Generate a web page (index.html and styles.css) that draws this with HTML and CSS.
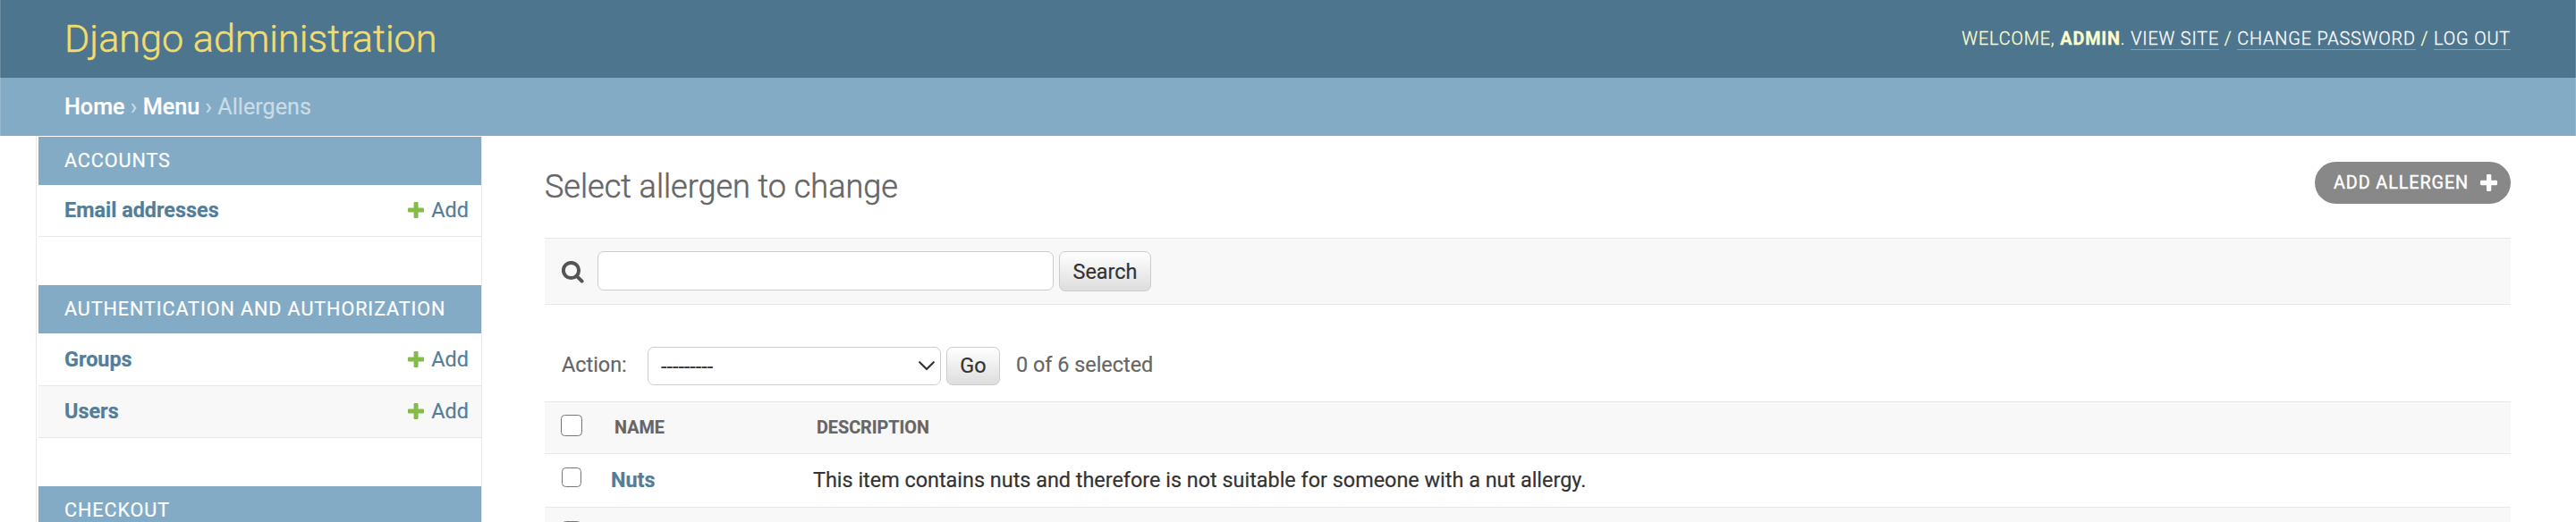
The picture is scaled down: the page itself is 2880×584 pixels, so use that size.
FILE: index.html
```html
<!DOCTYPE html>
<html lang="en">
<head>
<meta charset="utf-8">
<title>Select allergen to change | Django administration</title>
<link rel="stylesheet" href="styles.css">
</head>
<body>
<svg class="defs" width="0" height="0">
  <symbol id="plus" viewBox="0 0 18 18"><path d="M7.700 0h2.800q1.100 0 1.100 1.100v5.400h5.300q1.100 0 1.100 1.100v2.800q0 1.100-1.100 1.100h-5.300v5.400q0 1.100-1.100 1.100h-2.800q-1.100 0-1.100-1.100v-5.400h-5.500q-1.100 0-1.100-1.100v-2.800q0-1.100 1.100-1.100h5.500v-5.400q0-1.100 1.100-1.100z"/></symbol>
</svg>
<header class="header">
  <h1 class="brand">Django administration</h1>
  <div class="usertools">Welcome, <strong>admin</strong>. <a>View site</a> / <a>Change password</a> / <a>Log out</a></div>
</header>
<nav class="breadcrumbs"><a>Home</a> › <a>Menu</a> › Allergens</nav>
<main class="main">
  <aside class="sidebar">
    <section class="module">
      <h2 class="caption">Accounts</h2>
      <div class="model"><a class="name">Email addresses</a><a class="add"><svg><use href="#plus"/></svg>Add</a></div>
    </section>
    <section class="module">
      <h2 class="caption">Authentication and Authorization</h2>
      <div class="model model-first"><a class="name">Groups</a><a class="add"><svg><use href="#plus"/></svg>Add</a></div>
      <div class="model alt"><a class="name">Users</a><a class="add"><svg><use href="#plus"/></svg>Add</a></div>
    </section>
    <section class="module">
      <h2 class="caption">Checkout</h2>
    </section>
  </aside>
  <section class="content">
    <div class="titlebar">
      <h1 class="title">Select allergen to change</h1>
      <a class="addlink">Add allergen<svg><use href="#plus"/></svg></a>
    </div>
    <form class="search">
      <svg class="lens" viewBox="0 0 25 25"><circle cx="10.5" cy="10.5" r="8.6"/><path d="M16.8 16.8l5.8 5.8"/></svg>
      <input class="field" type="text">
      <button class="btn search-btn" type="button">Search</button>
    </form>
    <div class="actions">
      <span class="action-label">Action:</span>
      <div class="select"><span>---------</span><svg viewBox="0 0 18 11"><path d="M1.200 1.200L9 9l7.800-7.800"/></svg></div>
      <button class="btn go-btn" type="button">Go</button>
      <span class="counter">0 of 6 selected</span>
    </div>
    <div class="table">
      <div class="row head"><i class="check"></i><span>Name</span><span>Description</span></div>
      <div class="row"><i class="check"></i><a class="name">Nuts</a><span>This item contains nuts and therefore is not suitable for someone with a nut allergy.</span></div>
      <div class="row alt"><i class="check"></i></div>
    </div>
  </section>
</main>
</body>
</html>
```

FILE: styles.css
```css
* { box-sizing: border-box; }
body {
  margin: 0;
  height: 584px;
  overflow: hidden;
  background: #fff;
  color: #333;
  font-family: Roboto, "Liberation Sans", sans-serif;
  font-size: 23.4px;
  line-height: 28px;
  -webkit-text-stroke: .2px;
}
h1, h2 { margin: 0; font-weight: 400; }
.defs { display: block; }
.header, .breadcrumbs { box-shadow: inset 1px 0 rgba(255, 255, 255, .15), inset -1px 0 rgba(255, 255, 255, .15); }
.header {
  display: flex;
  align-items: center;
  justify-content: space-between;
  height: 87px;
  padding: 0 73px 0 72px;
  background: #4e758e;
  color: #ffc;
}
.brand { color: #f2dc6d; font-size: 43.2px; font-weight: 300; line-height: 50px; -webkit-text-stroke: .5px; }
.usertools {
  font-size: 19.8px;
  font-weight: 300;
  letter-spacing: .88px;
  line-height: 24px;
  text-transform: uppercase;
  -webkit-text-stroke: .3px;
}
.usertools strong { font-weight: 700; }
.usertools a { color: #fff; border-bottom: 1px solid #829fb0; }
.breadcrumbs {
  height: 65px;
  padding: 19px 72px 0;
  background: #84abc5;
  color: #c9dce7;
  font-size: 25.2px;
}
.breadcrumbs a { color: #fff; font-weight: 500; }
.main { display: flex; height: 432px; overflow: hidden; }
.sidebar {
  flex: none;
  width: 499px;
  margin-left: 40px;
  padding: 1px 0 0 2px;
  border: solid #e8e8e8;
  border-width: 0 1px;
}
.module { margin-bottom: 54px; }
.caption {
  height: 54px;
  padding: 13px 29px 0;
  background: #84abc5;
  color: #fff;
  font-size: 21.6px;
  letter-spacing: .9px;
  text-transform: uppercase;
  white-space: nowrap;
}
.model {
  display: flex;
  align-items: center;
  justify-content: space-between;
  height: 58px;
  padding: 0 14px 1px 29px;
  border-bottom: 1px solid #e8e8e8;
}
.model-first { height: 59px; }
.alt { background: #f8f8f8; }
.name { color: #537e9a; font-weight: 700; }
.add { display: flex; align-items: center; gap: 8px; color: #537e9a; }
.add svg { width: 18px; height: 18px; fill: #83bd48; }
.content { flex: 1; padding-left: 70px; margin-right: 73px; }
.titlebar { display: flex; justify-content: space-between; height: 114px; padding-top: 29px; }
.title { padding-top: 1px; color: #666; font-size: 36px; font-weight: 300; line-height: 54px; -webkit-text-stroke: .5px; }
.addlink {
  display: flex;
  align-items: center;
  gap: 13px;
  width: 219px;
  height: 47px;
  padding-left: 21px;
  border-radius: 24px;
  background: #888;
  color: #fff;
  font-size: 19.8px;
  letter-spacing: .9px;
  text-transform: uppercase;
  white-space: nowrap;
  -webkit-text-stroke: .4px;
}
.addlink svg { width: 19px; height: 19px; fill: #fff; }
.search {
  display: flex;
  height: 75px;
  padding: 14px 19px 0;
  border: solid #e8e8e8;
  border-width: 1px 0;
  background: #f8f8f8;
}
.lens { width: 25px; height: 25px; margin: 11px 15px 0 0; fill: none; stroke: #555; stroke-width: 4; stroke-linecap: round; }
.field { width: 510px; height: 44px; border: 1px solid #ccc; border-radius: 7px; background: #fff; }
.btn {
  height: 45px;
  padding: 0;
  border: 1px solid #ccc;
  border-radius: 7px;
  background: linear-gradient(#fff, #ddd);
  color: #333;
  font: 400 23.4px/28px Roboto, sans-serif;
}
.search-btn { width: 103px; margin-left: 6px; }
.actions { display: flex; height: 108px; padding: 47px 19px 0; color: #666; }
.action-label { width: 96px; padding-top: 6px; }
.select {
  display: flex;
  align-items: center;
  justify-content: space-between;
  width: 328px;
  height: 43px;
  padding: 0 6px 0 14px;
  border: 1px solid #ccc;
  border-radius: 7px;
  color: #333;
}
.select svg { width: 18px; height: 11px; fill: none; stroke: #333; stroke-width: 2.2; stroke-linecap: round; }
.go-btn { width: 60px; height: 43px; margin-left: 6px; padding-bottom: 1px; }
.counter { margin-left: 18px; padding-top: 6px; }
.row {
  display: grid;
  grid-template-columns: 74px 226px 1fr;
  height: 60px;
  padding-top: 15px;
  border-bottom: 1px solid #e8e8e8;
}
.head {
  height: 59px;
  padding-top: 15px;
  grid-template-columns: 78px 226px 1fr;
  border-top: 1px solid #e8e8e8;
  background: #f8f8f8;
  color: #666;
  font-size: 19.8px;
  font-weight: 700;
  text-transform: uppercase;
}
.check { width: 22px; height: 22px; margin-left: 19px; border: 1.500px solid #767676; border-radius: 4.500px; background: #fff; }
.head .check { width: 24px; height: 24px; margin: -1px 0 0 18px; }
```
